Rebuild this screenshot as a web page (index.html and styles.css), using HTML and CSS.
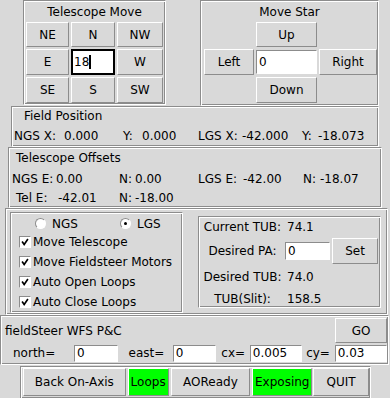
FILE: index.html
```html
<!DOCTYPE html>
<html>
<head>
<meta charset="utf-8">
<link rel="stylesheet" href="styles.css">
</head>
<body>
<div class="app">
  <div class="top">
    <div class="frame tmove">
      <div class="ftitle">Telescope Move</div>
      <div class="tgrid">
        <div class="btn">NE</div>
        <div class="btn">N</div>
        <div class="btn">NW</div>
        <div class="btn">E</div>
        <div class="entry focus">18<span class="caret"></span></div>
        <div class="btn">W</div>
        <div class="btn">SE</div>
        <div class="btn">S</div>
        <div class="btn">SW</div>
      </div>
    </div>
    <div class="frame mstar">
      <div class="ftitle">Move Star</div>
      <div class="mgrid">
        <div class="btn up">Up</div>
        <div class="btn left">Left</div>
        <div class="entry mentry">0</div>
        <div class="btn right">Right</div>
        <div class="btn down">Down</div>
      </div>
    </div>
  </div>

  <div class="frame fieldpos">
    <div class="stitle fp-title">Field Position</div>
    <div class="row fp-row">
      <span>NGS X:</span><span>0.000</span><span>Y:</span><span>0.000</span>
      <span>LGS X:</span><span>-42.000</span><span>Y:</span><span>-18.073</span>
    </div>
  </div>

  <div class="frame offsets">
    <div class="stitle to-title">Telescope Offsets</div>
    <div class="row to-row2">
      <span>NGS E:</span><span>0.00</span><span>N:</span><span>0.00</span>
      <span>LGS E:</span><span>-42.00</span><span>N:</span><span>-18.07</span>
    </div>
    <div class="row to-row3">
      <span>Tel E:</span><span>-42.01</span><span>N:</span><span>-18.00</span>
    </div>
  </div>

  <div class="frame outer">
    <div class="frame checks">
      <div class="radios">
        <div class="radio-item first"><span class="radio"></span>NGS</div>
        <div class="radio-item"><span class="radio on"></span>LGS</div>
      </div>
      <div class="check-row"><span class="cbox"><svg viewBox="0 0 12 12" width="12" height="12"><path d="M2.5 5.5 L5 9 L9.5 2.5" fill="none" stroke="#000" stroke-width="2"/></svg></span>Move Telescope</div>
      <div class="check-row"><span class="cbox"><svg viewBox="0 0 12 12" width="12" height="12"><path d="M2.5 5.5 L5 9 L9.5 2.5" fill="none" stroke="#000" stroke-width="2"/></svg></span>Move Fieldsteer Motors</div>
      <div class="check-row"><span class="cbox"><svg viewBox="0 0 12 12" width="12" height="12"><path d="M2.5 5.5 L5 9 L9.5 2.5" fill="none" stroke="#000" stroke-width="2"/></svg></span>Auto Open Loops</div>
      <div class="check-row last"><span class="cbox"><svg viewBox="0 0 12 12" width="12" height="12"><path d="M2.5 5.5 L5 9 L9.5 2.5" fill="none" stroke="#000" stroke-width="2"/></svg></span>Auto Close Loops</div>
    </div>
    <div class="frame tub">
      <div class="tub-grid">
        <span class="lbl">Current TUB:</span><span class="val">74.1</span><span></span>
        <span class="lbl">Desired PA:</span><span><span class="entry pa">0</span></span><span class="btn set">Set</span>
        <span class="lbl">Desired TUB:</span><span class="val">74.0</span><span></span>
        <span class="lbl">TUB(Slit):</span><span class="val">158.5</span><span></span>
      </div>
    </div>
  </div>

  <div class="frame steer">
    <div class="steer-top">
      <span class="steer-title">fieldSteer WFS P&amp;C</span>
      <span class="btn go">GO</span>
    </div>
    <div class="steer-row">
      <span class="slbl north">north=</span><span class="entry se e1">0</span>
      <span class="slbl east">east=</span><span class="entry se e2">0</span>
      <span class="slbl cx">cx=</span><span class="entry se e3">0.005</span>
      <span class="slbl cy">cy=</span><span class="entry se e4">0.03</span>
    </div>
  </div>

  <div class="frame bar">
    <span class="btn b-back">Back On-Axis</span>
    <span class="btn b-loops green">Loops</span>
    <span class="btn b-ao">AOReady</span>
    <span class="btn b-exp green">Exposing</span>
    <span class="btn b-quit">QUIT</span>
  </div>
</div>
</body>
</html>
```

FILE: styles.css
```css
* { box-sizing: border-box; }
html, body {
  margin: 0;
  padding: 0;
  background: #d9d9d9;
}
body {
  font-family: "DejaVu Sans", sans-serif;
  font-size: 12px;
  color: #000;
  width: 390px;
  height: 398px;
  overflow: hidden;
}
.app {
  display: flex;
  flex-direction: column;
  width: 390px;
}

/* groove frame */
.frame {
  border: 1px solid;
  border-color: #8c8c8c #ffffff #ffffff #8c8c8c;
  box-shadow: inset 1px 1px 0 #ffffff, inset -1px -1px 0 #8c8c8c;
  padding: 1px;
}

.btn {
  display: flex;
  align-items: center;
  justify-content: center;
  background: #d9d9d9;
  border: 1px solid;
  border-color: #ffffff #8c8c8c #8c8c8c #ffffff;
  line-height: 1;
  white-space: nowrap;
}
.green { background: #00ff00; }

.entry {
  display: flex;
  align-items: center;
  background: #ffffff;
  border: 1px solid;
  border-color: #8c8c8c #ffffff #ffffff #8c8c8c;
  padding-left: 2px;
  line-height: 1;
}
.entry.focus {
  border: 2px solid #000;
  padding-left: 1px;
}
.caret {
  display: inline-block;
  width: 2px;
  height: 14px;
  background: #000;
}

/* top row */
.top {
  display: flex;
  height: 106px;
}
.tmove {
  margin-left: 23px;
  width: 143px;
  height: 105px;
}
.ftitle {
  height: 20px;
  line-height: 20px;
  text-align: center;
}
.tgrid {
  display: grid;
  grid-template-columns: 43px 44px 46px;
  grid-template-rows: 25px 26px 26px;
  gap: 2px;
  padding-left: 1px;
}
.mstar {
  margin-left: 34px;
  width: 179px;
  height: 106px;
}
.mgrid {
  display: grid;
  grid-template-columns: 50px 61px 58px;
  grid-template-rows: 25px 26px 26px;
  gap: 2px;
  padding-left: 2px;
}
.up { grid-column: 2; grid-row: 1; }
.left { grid-column: 1; grid-row: 2; }
.mentry { grid-column: 2; grid-row: 2; margin: 1px 0; }
.right { grid-column: 3; grid-row: 2; }
.down { grid-column: 2; grid-row: 3; }

/* field position */
.fieldpos {
  margin-left: 11px;
  width: 368px;
  height: 41px;
  padding-top: 2px;
}
.stitle {
  line-height: 14px;
  height: 14px;
}
.fp-title { padding-left: 11px; }
.row {
  display: grid;
  height: 16px;
  line-height: 16px;
  white-space: nowrap;
}
.fp-row {
  margin-top: 5px;
  padding-left: 1px;
  grid-template-columns: 50px 59px 19px 56px 44px 60px 16px auto;
}

/* telescope offsets */
.offsets {
  margin-left: 8px;
  width: 374px;
  height: 61px;
  padding-top: 2px;
}
.to-title {
  height: 16px;
  line-height: 16px;
  padding-left: 6px;
}
.to-row2 {
  margin-top: 5px;
  padding-left: 2px;
  grid-template-columns: 44px 63px 16px 63px 45px 60px 17px auto;
}
.to-row3 {
  margin-top: 3px;
  padding-left: 6px;
  grid-template-columns: 42px 61px 16px auto;
}

/* outer frame with checks and tub */
.outer {
  margin-left: 5px;
  width: 383px;
  height: 107px;
  display: flex;
  align-items: flex-start;
  padding: 1px 2px;
}
.checks {
  margin-top: 2px;
  margin-left: 2px;
  width: 173px;
  height: 101px;
  padding: 1px;
}
.radios {
  display: flex;
  height: 17px;
  margin-top: 1px;
  align-items: center;
  padding-left: 23px;
}
.radio-item {
  display: flex;
  align-items: center;
}
.radio-item.first { width: 85px; }
.radio {
  width: 11px;
  height: 11px;
  border-radius: 50%;
  background: #fff;
  border: 1px solid;
  border-color: #8c8c8c #ffffff #ffffff #8c8c8c;
  margin-right: 6px;
  display: flex;
  align-items: center;
  justify-content: center;
}
.radio.on::after {
  content: "";
  width: 3px;
  height: 3px;
  border-radius: 50%;
  background: #000;
}
.check-row {
  display: flex;
  align-items: center;
  height: 20px;
  padding-left: 7px;
  white-space: nowrap;
}
.check-row.last { height: 19px; }
.cbox {
  width: 12px;
  height: 12px;
  background: #fff;
  border: 1px solid;
  border-color: #8c8c8c #ffffff #ffffff #8c8c8c;
  margin-right: 2px;
  display: flex;
  align-items: center;
  justify-content: center;
}
.cbox svg { display: block; width: 10px; height: 10px; }

.tub {
  margin-top: 6px;
  margin-left: 15px;
  width: 183px;
  height: 92px;
}
.tub-grid {
  display: grid;
  grid-template-columns: 85px 47px 46px;
  grid-template-rows: 18px 26px 22px 18px;
  row-gap: 2px;
  align-items: center;
  white-space: nowrap;
}
.lbl { text-align: center; }
.val { padding-left: 2px; }
.pa {
  width: 45px;
  height: 18px;
}
.set {
  width: 46px;
  height: 26px;
}

/* field steer */
.steer {
  width: 389px;
  height: 50px;
  padding: 1px 1px 1px 2px;
}
.steer-top {
  display: flex;
  align-items: center;
  justify-content: space-between;
  height: 27px;
}
.steer-title { padding-left: 2px; }
.go {
  width: 52px;
  height: 25px;
}
.steer-row {
  display: flex;
  align-items: center;
  height: 18px;
  white-space: nowrap;
}
.slbl { display: inline-block; }
.north { margin-left: 10px; width: 62px; }
.east { margin-left: 11px; width: 45px; }
.cx { margin-left: 5px; width: 29px; }
.cy { margin-left: 4px; width: 29px; }
.se { height: 17px; }
.e1 { width: 44px; }
.e2 { width: 44px; }
.e3 { width: 53px; }
.e4 { width: 53px; }

/* bottom bar */
.bar {
  margin-left: 20px;
  width: 351px;
  height: 33px;
  margin-top: 1px;
  display: flex;
  align-items: flex-start;
  padding: 1px 1px 1px 2px;
  gap: 2px;
}
.bar .btn { height: 28px; }
.b-back { width: 103px; }
.b-loops { width: 41px; }
.b-ao { width: 80px; }
.b-exp { width: 60px; margin-right: -1px; }
.b-quit { width: 56px; }
```
